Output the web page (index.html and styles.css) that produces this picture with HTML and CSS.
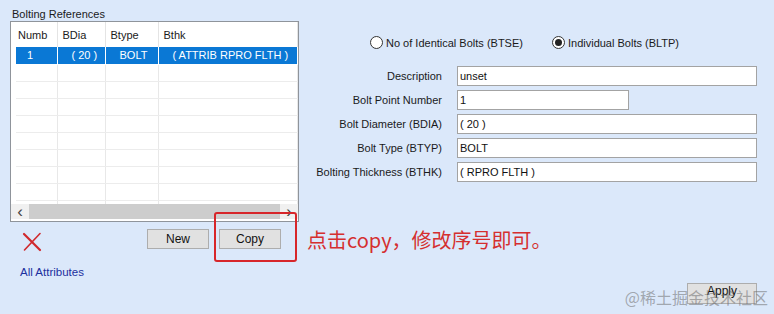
FILE: index.html
```html
<!DOCTYPE html>
<html lang="en">
<head>
  <meta charset="UTF-8" />
  <title>Bolting References</title>
  <link rel="stylesheet" href="styles.css">
</head>
<body>
  <div class="window">
    <div class="main">
      <div class="refs">
        <div class="group-label">Bolting References</div>
        <div class="grid">
          <div class="grid-body">
            <table class="grid-table">
              <thead>
                <tr>
                  <th class="c-numb">Numb</th>
                  <th class="c-bdia">BDia</th>
                  <th class="c-btype">Btype</th>
                  <th class="c-bthk">Bthk</th>
                </tr>
              </thead>
              <tbody>
                <tr class="selected">
                  <td class="c-numb">1</td>
                  <td class="c-bdia">( 20 )</td>
                  <td class="c-btype">BOLT</td>
                  <td class="c-bthk">( ATTRIB RPRO FLTH )</td>
                </tr>
                <tr><td></td><td></td><td></td><td></td></tr>
                <tr><td></td><td></td><td></td><td></td></tr>
                <tr><td></td><td></td><td></td><td></td></tr>
                <tr><td></td><td></td><td></td><td></td></tr>
                <tr><td></td><td></td><td></td><td></td></tr>
                <tr><td></td><td></td><td></td><td></td></tr>
                <tr><td></td><td></td><td></td><td></td></tr>
                <tr><td></td><td></td><td></td><td></td></tr>
                <tr><td></td><td></td><td></td><td></td></tr>
              </tbody>
            </table>
          </div>
          <div class="hscroll">
            <span class="arrow">&lsaquo;</span>
            <span class="thumb"></span>
            <span class="arrow">&rsaquo;</span>
          </div>
        </div>
      </div>

      <div class="details">
        <div class="radios">
          <label class="radio"><span class="dot"></span>No of Identical Bolts (BTSE)</label>
          <label class="radio checked"><span class="dot"></span>Individual Bolts (BLTP)</label>
        </div>
        <div class="fields">
          <span class="field-label">Description</span>
          <input class="field" type="text" value="unset">
          <span class="field-label">Bolt Point Number</span>
          <input class="field short" type="text" value="1">
          <span class="field-label">Bolt Diameter (BDIA)</span>
          <input class="field" type="text" value="( 20 )">
          <span class="field-label">Bolt Type (BTYP)</span>
          <input class="field" type="text" value="BOLT">
          <span class="field-label">Bolting Thickness (BTHK)</span>
          <input class="field" type="text" value="( RPRO FLTH )">
        </div>
      </div>
    </div>

    <div class="actions">
      <svg class="delete-icon" width="20" height="20" viewBox="0 0 20 20">
        <path d="M2 2 L18 18" stroke="#d0282c" stroke-width="2.2" stroke-linecap="round"/>
        <path d="M18 1.5 L2.5 18" stroke="#d0282c" stroke-width="1.6" stroke-linecap="round"/>
      </svg>
      <button class="btn btn-new">New</button>
      <div class="copy-wrap">
        <button class="btn">Copy</button>
        <div class="highlight"></div>
      </div>
      <span class="note">点击copy，修改序号即可。</span>
    </div>

    <a class="all-attrs" href="#">All Attributes</a>

    <div class="footer">
      <button class="btn btn-apply">Apply</button>
    </div>

    <div class="watermark">@稀土掘金技术社区</div>
  </div>
</body>
</html>
```

FILE: styles.css
```css
body {
  margin: 0;
  background: #dbe8fa;
  font-family: "Liberation Sans", Arial, sans-serif;
  font-size: 11px;
  color: #1a1a1a;
}

.window {
  position: relative;
  width: 774px;
  height: 314px;
  overflow: hidden;
}

.main {
  display: flex;
  padding: 8px 0 0 10px;
}

.refs {
  width: 289px;
}

.group-label {
  height: 13px;
  line-height: 13px;
  padding-left: 2px;
}

.grid {
  box-sizing: border-box;
  height: 201px;
  border: 1px solid #8f949b;
  background: #fff;
  display: flex;
  flex-direction: column;
}

.grid-body {
  flex: 1;
  overflow: hidden;
  padding-left: 5px;
}

.grid-table {
  border-collapse: collapse;
  table-layout: fixed;
  width: 281px;
}

.grid-table th,
.grid-table td {
  box-sizing: border-box;
  white-space: nowrap;
  overflow: hidden;
}

.grid-table th {
  height: 25px;
  font-weight: normal;
  text-align: left;
  padding: 0 0 0 5px;
  border-right: 1px solid #e4e4e4;
}

.grid-table th.c-numb {
  padding-left: 2px;
}

.grid-table td {
  height: 17px;
  padding: 0 0 0 14px;
  border-right: 1px solid #e8e8e8;
  border-bottom: 1px solid #ececec;
}

.grid-table td.c-numb {
  padding-left: 11px;
}

.c-numb { width: 41px; }
.c-bdia { width: 48px; }
.c-btype { width: 53px; }
.c-bthk { width: 139px; }

.grid-table tr.selected td {
  background: #0a78d5;
  color: #fff;
  border-right: 1px solid #fff;
  border-bottom: 1px solid #fff;
}

.hscroll {
  height: 15px;
  margin-bottom: 2px;
  display: flex;
  align-items: center;
  background: #f0f0f0;
}

.hscroll .arrow {
  width: 18px;
  text-align: center;
  font-size: 17px;
  line-height: 14px;
  color: #444;
}

.hscroll .thumb {
  flex: 1;
  height: 15px;
  background: #cdcdcd;
}

.details {
  flex: 1;
  padding-top: 28px;
}

.radios {
  display: flex;
  gap: 29px;
  padding-left: 71px;
  height: 13px;
  align-items: center;
}

.radio {
  display: flex;
  align-items: center;
  gap: 3px;
}

.dot {
  box-sizing: border-box;
  width: 13px;
  height: 13px;
  border: 1px solid #333;
  border-radius: 50%;
  background: #fff;
  display: flex;
  align-items: center;
  justify-content: center;
}

.radio.checked .dot::after {
  content: "";
  width: 7px;
  height: 7px;
  border-radius: 50%;
  background: #222;
}

.fields {
  display: grid;
  grid-template-columns: 131px 300px;
  column-gap: 15px;
  row-gap: 4px;
  margin-top: 17px;
  padding-left: 12px;
}

.field-label {
  text-align: right;
  line-height: 20px;
}

.field {
  box-sizing: border-box;
  height: 20px;
  width: 300px;
  border: 1px solid #a3a3a3;
  background: #fff;
  padding: 0 2px;
  font: inherit;
  color: #111;
}

.field.short {
  width: 172px;
}

.actions {
  display: flex;
  align-items: flex-start;
  margin-top: 7px;
  padding-left: 22px;
  height: 22px;
}

.delete-icon {
  margin-top: 3px;
}

.btn {
  box-sizing: border-box;
  height: 20px;
  width: 62px;
  border: 1px solid #adadad;
  background: #e1e1e1;
  font: inherit;
  font-size: 12px;
  color: #111;
  padding: 0;
}

.btn-new {
  margin-left: 105px;
}

.copy-wrap {
  position: relative;
  margin-left: 10px;
}

.highlight {
  position: absolute;
  left: -5px;
  top: -17px;
  width: 83px;
  height: 50px;
  box-sizing: border-box;
  border: 2.5px solid #d7262a;
  border-radius: 3px;
}

.note {
  margin-left: 26px;
  font-family: "Noto Sans CJK SC", sans-serif;
  font-size: 20px;
  line-height: 22px;
  color: #d52f2f;
}

.all-attrs {
  display: block;
  margin: 15px 0 0 20px;
  color: #1c2f9e;
  text-decoration: none;
  font-size: 11.5px;
  line-height: 13px;
  width: max-content;
}

.footer {
  display: flex;
  justify-content: flex-end;
  padding-right: 17px;
  margin-top: 4px;
}

.btn-apply {
  width: 70px;
  height: 21px;
  padding-bottom: 6px;
}

.watermark {
  position: absolute;
  right: 6px;
  bottom: 8px;
  font-family: "Noto Sans CJK SC", sans-serif;
  font-size: 16px;
  line-height: 18px;
  color: rgba(110, 110, 110, 0.55);
}
```
